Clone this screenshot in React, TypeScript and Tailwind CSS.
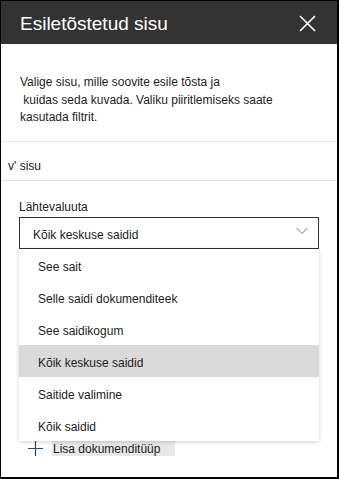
import { useState } from "react";

const options = [
  "See sait",
  "Selle saidi dokumenditeek",
  "See saidikogum",
  "Kõik keskuse saidid",
  "Saitide valimine",
  "Kõik saidid",
];

export default function App() {
  const [selected, setSelected] = useState("Kõik keskuse saidid");

  return (
    <div className="w-[339px] h-[479px] overflow-hidden bg-white border-l border-t border-r-2 border-b-2 border-black font-['Liberation_Sans',Arial,sans-serif] text-[#222]">
      {/* Panel header */}
      <div className="h-[43px] bg-[#333333] flex items-center justify-between pl-[19px] pr-[21px]">
        <h1 className="text-[19px] text-white leading-none pt-[2px]">Esiletõstetud sisu</h1>
        <svg width="17" height="17" viewBox="0 0 17 17" className="mt-[2px]">
          <path d="M1 1 L16 16 M16 1 L1 16" stroke="#ffffff" strokeWidth="1.6" fill="none" />
        </svg>
      </div>

      <p className="px-[19px] pt-[30px] pb-[14px] text-[12px] leading-[17.5px]">
        Valige sisu, mille soovite esile tõsta ja
        <br />
        &nbsp;kuidas seda kuvada. Valiku piiritlemiseks saate
        <br />
        kasutada filtrit.
      </p>

      <div className="border-t border-[#e6e6e6] h-[39px] flex items-center pl-[7px] pt-[10px] text-[12px]">
        v' sisu
      </div>

      <div className="border-t border-[#e6e6e6] px-[18px] pt-[18px]">
        <div className="text-[12px] leading-[16px] mb-[2px]">Lähtevaluuta</div>
        <div className="relative">
          <div className="h-[32px] border border-[#333] flex items-center justify-between pl-[13px] pr-[10px] pt-[5px] text-[12px]">
            <span>{selected}</span>
            <svg width="12" height="8" viewBox="0 0 12 8" className="-mt-[8px]">
              <path d="M0.5 1 L6 6.5 L11.5 1" stroke="#777" strokeWidth="1" fill="none" />
            </svg>
          </div>

          {/* Open dropdown menu */}
          <ul className="absolute left-0 right-0 top-[32px] z-10 bg-white shadow-[0_1px_4px_rgba(0,0,0,0.18)] text-[12px]">
            {options.map((o) => (
              <li
                key={o}
                onClick={() => setSelected(o)}
                className={`h-[32px] flex items-center pl-[19px] pt-[5px] cursor-pointer ${
                  o === selected ? "bg-[#dadada]" : "bg-white"
                }`}
              >
                {o}
              </li>
            ))}
          </ul>

          <div className="h-[193px]" />
          <div className="flex items-center gap-[9px] pl-[9px] -mt-[1px]">
            <svg width="15" height="15" viewBox="0 0 15 15">
              <path d="M7.5 0 V15 M0 7.5 H15" stroke="#2f3f8f" strokeWidth="1.2" fill="none" />
            </svg>
            <span className="bg-[#e8e8e8] h-[15px] w-[123px] pl-[1px] text-[12px] leading-[16px]">
              Lisa dokumenditüüp
            </span>
          </div>
        </div>
      </div>
    </div>
  );
}
